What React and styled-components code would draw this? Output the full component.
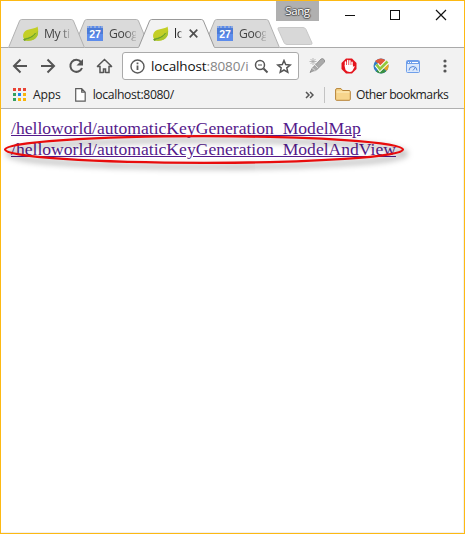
import React from 'react';
import styled, { createGlobalStyle } from 'styled-components';

const GlobalStyle = createGlobalStyle`
  * { box-sizing: border-box; }
  body { margin: 0; background: #fff; font-family: "Open Sans", "Noto Sans", sans-serif; }
  svg { display: block; flex: none; }
`;

const Window = styled.div`
  width: 465px;
  height: 534px;
  display: flex;
  flex-direction: column;
  border: 1px solid #fdb913;
  background: #fff;
  overflow: hidden;
`;

const TitleBar = styled.header`
  height: 46px;
  flex: none;
  display: flex;
  align-items: flex-end;
  padding-left: 7px;
`;

const TabStrip = styled.nav`
  display: flex;
  align-items: flex-end;
  height: 46px;
  margin-right: -40px;
`;

const Tab = styled.div`
  position: relative;
  z-index: ${(p) => p.$z};
  width: 77px;
  height: 29px;
  margin-right: -12px;
  margin-bottom: -1px;
`;

const TabShape = styled.svg`
  position: absolute;
  inset: 0;
`;

const TabContent = styled.div`
  position: relative;
  display: flex;
  align-items: center;
  height: 29px;
  padding-left: 14px;
`;

const TabLabel = styled.span`
  width: ${(p) => p.$w}px;
  margin-left: ${(p) => p.$gap}px;
  overflow: hidden;
  white-space: nowrap;
  font-size: 12.2px;
  line-height: 18px;
  letter-spacing: -0.4px;
  color: ${(p) => (p.$active ? '#222' : '#444')};
  mask-image: linear-gradient(to right, #000 60%, rgba(0, 0, 0, 0.15));
`;

const CloseIcon = styled.svg`
  margin-left: 7px;
`;

const NewTab = styled.svg`
  margin: 0 0 2px 9px;
`;

const Controls = styled.div`
  display: flex;
  flex: none;
  align-self: flex-start;
  margin-left: auto;
`;

const UserBadge = styled.div`
  width: 43px;
  height: 20px;
  background: #b0b0b0;
  color: #fff;
  font-size: 11.5px;
  line-height: 20px;
  text-align: center;
  letter-spacing: -0.4px;
  text-shadow: 0 1px 1px #444, 1px 0 1px #555, -1px 0 1px #555, 0 -1px 1px #666;
`;

const WindowButtons = styled.svg`
  margin-left: 23px;
`;

const Toolbar = styled.div`
  height: 62px;
  flex: none;
  border-top: 1px solid #aaa;
  border-bottom: 1px solid #b0b0b0;
  background: #f2f2f2;
`;

const NavRow = styled.div`
  display: flex;
  align-items: center;
  height: 36px;
  padding: 0 0 0 11px;
`;

const NavIcons = styled.div`
  display: flex;
  gap: 12px;
  width: 110px;
`;

const AddressBar = styled.div`
  display: flex;
  align-items: center;
  width: 177px;
  height: 28px;
  padding-left: 7px;
  border: 1px solid #aaa;
  border-radius: 3px;
  background: #fff;
`;

const Url = styled.span`
  width: 98px;
  margin: 0 5px 0 6px;
  overflow: hidden;
  white-space: nowrap;
  font-size: 13.5px;
  line-height: 20px;
  letter-spacing: -0.12px;
  color: #111;
`;

const UrlRest = styled.span`
  color: #858585;
`;

const StarIcon = styled.svg`
  margin-left: 7px;
`;

const Extensions = styled.div`
  display: flex;
  align-items: center;
  gap: 16px;
  margin-left: 10px;
`;

const MenuDots = styled.svg`
  margin-left: 23px;
`;

const BookmarksRow = styled.div`
  display: flex;
  align-items: center;
  height: 21px;
  padding-left: 11px;
`;

const BookmarkLabel = styled.span`
  margin-left: ${(p) => p.$gap}px;
  font-size: 12.2px;
  line-height: 18px;
  letter-spacing: ${(p) => p.$spacing ?? -0.2}px;
  white-space: nowrap;
  color: #222;
`;

const PageIcon = styled.svg`
  margin-left: 14px;
`;

const Overflow = styled.svg`
  margin-left: auto;
`;

const Divider = styled.i`
  width: 1px;
  height: 16px;
  margin: 0 10px 0 10px;
  background: #c3c3c3;
`;

const OtherBookmarks = styled.div`
  display: flex;
  align-items: center;
  width: 129px;
`;

const Page = styled.main`
  position: relative;
  flex: 1;
  display: flex;
  flex-direction: column;
  align-items: flex-start;
  padding: 9px 0 0 10px;
  border-right: 1px solid #f0f0f0;
  border-bottom: 1px solid #f0f0f0;
`;

const PageLink = styled.a`
  font: 17.6px/21px "Liberation Serif", serif;
  color: #551a8b;
  text-decoration: underline;
  white-space: nowrap;
`;

const Highlight = styled.svg`
  position: absolute;
  left: 0;
  top: 17px;
  overflow: visible;
  filter: drop-shadow(3px 4px 3px rgba(0, 0, 0, 0.55));
`;

function Leaf() {
  return (
    <svg width="17" height="16" viewBox="0 0 17 16">
      <path d="M15.500.5C13 3.500 5 2 2 6.500c-1.800 3-.8 6.500 1.500 8 5 1 9.500-.5 11.500-4 1.600-3 1.500-7 .5-10Z" fill="#c3cf26" />
      <path d="M15.500 4.500C14 9 8 10.500 2 12.500l1.500 2c6.500.8 10.500-1.500 12-5 .9-2.200.5-3 0-5Z" fill="#a9c52c" />
      <path d="M1.500 13.500C7 12.500 11 11 13.500 7" stroke="#579b2d" fill="none" strokeWidth="1" />
      <circle cx="2.700" cy="13.800" r="1.100" fill="#6c9f25" />
    </svg>
  );
}

const Day = styled.span`
  display: flex;
  justify-content: center;
  flex: none;
  width: 16px;
  height: 15px;
  border-top: 2px dotted #90acdf;
  background: linear-gradient(#4c7bd7 50%, #5d8cec 50%);
  color: #fff;
  font: bold 10.5px/13px "Liberation Sans", sans-serif;
`;

function BrowserTab({ kind, label, active, z }) {
  return (
    <Tab $z={z}>
      <TabShape width="77" height="29" viewBox="0 0 77 29">
        <path
          d="M0 28.500 L1 27.500 L11.500 2 Q12.200 .5 13.500 .5 H63.500 Q64.800 .5 65.500 2 L76 27.500 L77 28.500"
          fill={active ? '#f2f2f2' : '#dadada'}
          stroke={active ? '#999' : '#b2b2b2'}
        />
        <path d="M1 28.500H76" stroke={active ? '#f2f2f2' : '#aaa'} />
      </TabShape>
      <TabContent>
        {kind === 'leaf' ? <Leaf /> : <Day>27</Day>}
        <TabLabel $active={active} $w={active ? 8 : 27} $gap={active ? 5 : kind === 'leaf' ? 5 : 6}>
          {label}
        </TabLabel>
        {active && (
          <CloseIcon width="9" height="9" viewBox="0 0 9 9">
            <path d="M.7.7l7.600 7.600M8.300.7L.7 8.300" stroke="#505050" strokeWidth="1.700" />
          </CloseIcon>
        )}
      </TabContent>
    </Tab>
  );
}

const stroke = { fill: 'none', stroke: '#555', strokeWidth: 2 };

export default function App() {
  return (
    <>
      <GlobalStyle />
      <Window>
        <TitleBar>
          <TabStrip>
            <BrowserTab kind="leaf" label="My ti" z={3} />
            <BrowserTab kind="day" label="Goog" z={2} />
            <BrowserTab kind="leaf" label="lo" z={4} active />
            <BrowserTab kind="day" label="Goog" z={1} />
            <NewTab width="36" height="18" viewBox="0 0 36 18">
              <path d="M2.500.5H26Q28 .5 29 2.500L35 16Q35.500 17.500 33.500 17.500H10Q8 17.500 7 15.500L1 2Q.5.5 2.500.5Z" fill="#d8d8d8" stroke="#c8c8c8" />
            </NewTab>
          </TabStrip>
          <Controls>
            <UserBadge>Sang</UserBadge>
            <WindowButtons width="122" height="30" viewBox="343 1 122 30" fill="none" stroke="#111" shapeRendering="crispEdges">
              <path d="M346 15.500h10M391.500 10.500h9v9h-9z" />
              <path d="M437 10l10 10M447 10l-10 10" shapeRendering="auto" strokeWidth="1.200" />
            </WindowButtons>
          </Controls>
        </TitleBar>
        <Toolbar>
          <NavRow>
            <NavIcons>
              <svg width="16" height="16" viewBox="0 0 16 16"><path d="M15 8H2M8.500 1.500L2 8l6.500 6.500" {...stroke} /></svg>
              <svg width="16" height="16" viewBox="0 0 16 16"><path d="M1 8h13M7.500 1.500L14 8l-6.500 6.500" {...stroke} /></svg>
              <svg width="16" height="16" viewBox="0 0 16 16">
                <path d="M13 4A6 6 0 1 0 14 10" {...stroke} />
                <path d="M15 1v6.500H8.500Z" fill="#555" />
              </svg>
              <svg width="17" height="16" viewBox="0 0 17 16">
                <path d="M1 8.800L8.500 1.500 16 8.800M1 8.500H4v6h3.500M16 8.500H13v6H9.500M7.500 15v-4h2v4" {...stroke} strokeWidth="1.500" />
              </svg>
            </NavIcons>
            <AddressBar>
              <svg width="15" height="15" viewBox="0 0 15 15">
                <circle cx="7.500" cy="7.500" r="6.500" fill="none" stroke="#5a5a5a" strokeWidth="1.400" />
                <path d="M7.500 6.500V11M7.500 3.500v1.700" stroke="#5a5a5a" strokeWidth="1.800" />
              </svg>
              <Url>localhost<UrlRest>:8080/i</UrlRest></Url>
              <svg width="15" height="15" viewBox="0 0 15 15">
                <circle cx="6" cy="6" r="4.500" fill="none" stroke="#555" strokeWidth="1.500" />
                <path d="M9.500 9.500l4 4" stroke="#555" strokeWidth="1.900" />
                <path d="M4 6h4" stroke="#555" />
              </svg>
              <StarIcon width="16" height="15" viewBox="0 0 16 15">
                <path d="M8 1.500l1.700 4.100 4.500.4-3.400 2.900 1 4.400L8 11l-3.800 2.300 1-4.400L1.800 6l4.500-.4Z" fill="none" stroke="#555" strokeWidth="1.500" />
              </StarIcon>
            </AddressBar>
            <Extensions>
              <svg width="16" height="16" viewBox="0 0 16 16">
                <path d="M1 14.500l2-4L12 1q1.500-1 3 .5t0 3L7 12.500l-3 .5Z" fill="#aaa" stroke="#888" strokeWidth=".8" />
                <path d="M3.500 10l3 3M6 7l3 3" stroke="#ddd" />
                <path d="M4 0v7M.5 3.500h7M1.500 1l5 5M6.500 1l-5 5" stroke="#aaa" strokeWidth=".8" />
              </svg>
              <svg width="16" height="16" viewBox="0 0 16 16">
                <path d="M5 .5h6L15.500 5v6L11 15.500H5L.5 11V5Z" fill="#e4141d" />
                <path d="M4.500 8V4M6.700 8V2.500M8.900 8V2.800M11 9V4.200" stroke="#fff" strokeWidth="1.500" strokeLinecap="round" />
                <path d="M3.800 7h8v2.500l1-1.500 1 .5-2.500 4.500Q9.500 14.500 6.500 13.500 3.800 12 3.800 9Z" fill="#fff" />
              </svg>
              <svg width="17" height="16" viewBox="0 0 17 16">
                <circle cx="8" cy="8" r="7.500" fill="#327ec4" />
                <path d="M8 8L2 3Q8-2 13.500 3Z" fill="#e35739" />
                <path d="M8 8l6-4.500q3.500 5-.5 9.500Z" fill="#e2a525" />
                <path d="M8 8l5 5.500q-5 4-10 0Z" fill="#3a9140" />
                <path d="M3.500 6.500L7 11l7.500-7.500" fill="none" stroke="#fff" strokeWidth="4.600" />
                <path d="M3.500 6.500L7 11l7.500-7.500" fill="none" stroke="#91c83e" strokeWidth="2.800" />
              </svg>
              <svg width="14" height="13" viewBox="0 0 14 13">
                <rect x=".5" y=".5" width="13" height="12" rx="1" fill="#dbe8fb" stroke="#6f9fea" />
                <path d="M1 2.500h12" stroke="#6f9fea" strokeWidth="3" />
                <path d="M2 2.500h1m1 0h1m1 0h6" stroke="#fff" />
                <path d="M3 10.500a4 4 0 0 1 8 0M7 10.500l2-2.500" fill="none" stroke="#5488da" />
              </svg>
            </Extensions>
            <MenuDots width="4" height="14" viewBox="0 0 4 14" fill="#555">
              <circle cx="2" cy="2" r="1.600" /><circle cx="2" cy="7" r="1.600" /><circle cx="2" cy="12" r="1.600" />
            </MenuDots>
          </NavRow>
          <BookmarksRow>
            <svg width="14" height="13" viewBox="0 0 14 13" shapeRendering="crispEdges">
              <path d="M1 1.500h3m2 0h3m2 0h3" stroke="#ea4335" strokeWidth="3" />
              <path d="M1 6.500h3M1 11.500h3" stroke="#34a060" strokeWidth="3" />
              <path d="M6 6.500h3" stroke="#1c84ee" strokeWidth="3" />
              <path d="M11 6.500h3M6 11.500h3m2 0h3" stroke="#f9b50a" strokeWidth="3" />
            </svg>
            <BookmarkLabel $gap={7}>Apps</BookmarkLabel>
            <PageIcon width="11" height="14" viewBox="0 0 11 14">
              <path d="M.7.7h6l3.500 3.500v9H.7ZM6.700.7v3.500h3.500" fill="#fff" stroke="#5c5c5c" strokeWidth="1.200" />
            </PageIcon>
            <BookmarkLabel $gap={7} $spacing={-0.36}>localhost:8080/</BookmarkLabel>
            <Overflow width="9" height="8" viewBox="0 0 9 8"><path d="M1 1l3 3-3 3M5 1l3 3-3 3" fill="none" stroke="#555" strokeWidth="1.500" /></Overflow>
            <Divider />
            <OtherBookmarks>
              <svg width="16" height="13" viewBox="0 0 16 13">
                <path d="M.6 11.500V2q0-1.400 1.400-1.400h4L7.500 2.500H14q1.300 0 1.300 1.300v7.500q0 1-1.200 1H1.800Q.6 12.300.6 11.500Z" fill="#f7d58c" stroke="#b78336" />
                <path d="M1.500 4h13" stroke="#fff0c4" />
              </svg>
              <BookmarkLabel $gap={5} $spacing={-0.52}>Other bookmarks</BookmarkLabel>
            </OtherBookmarks>
          </BookmarksRow>
        </Toolbar>
        <Page>
          <PageLink>/helloworld/automaticKeyGeneration_ModelMap</PageLink>
          <PageLink>/helloworld/automaticKeyGeneration_ModelAndView</PageLink>
          <Highlight width="410" height="50" viewBox="1 126 410 50">
            <ellipse cx="204" cy="149.500" rx="199" ry="13.300" fill="none" stroke="#e80c0c" strokeWidth="2.300" />
          </Highlight>
        </Page>
      </Window>
    </>
  );
}
